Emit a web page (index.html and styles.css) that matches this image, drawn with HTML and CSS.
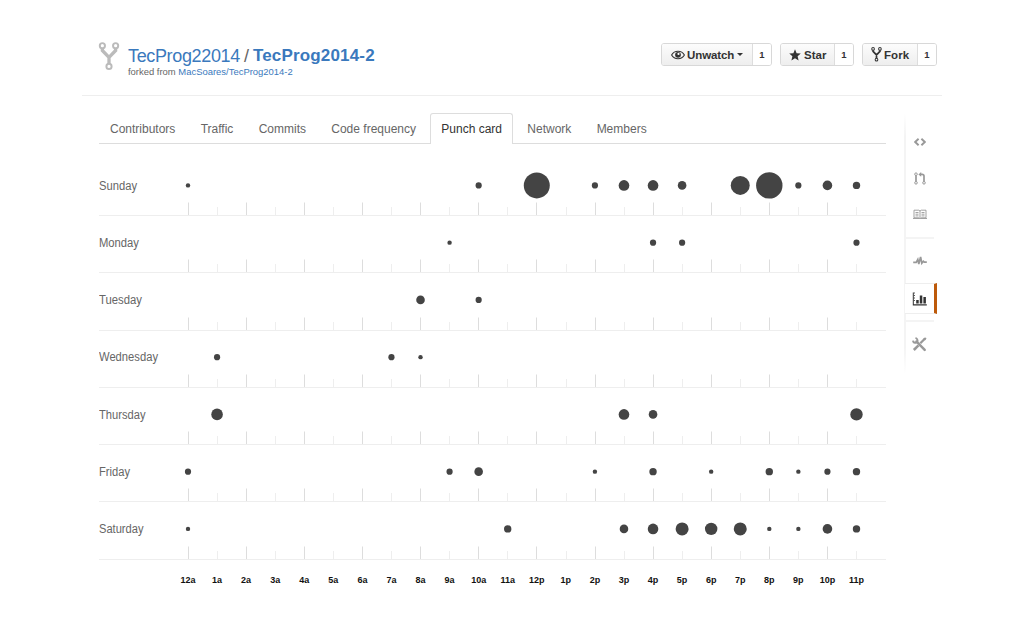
FILE: index.html
```html
<!DOCTYPE html>
<html lang="en">
<head>
<meta charset="utf-8">
<title>TecProg22014/TecProg2014-2</title>
<link rel="stylesheet" href="styles.css">
</head>
<body>
<svg class="defs" width="0" height="0" aria-hidden="true">
  <symbol id="fork" viewBox="0 0 20 28">
    <g fill="none" stroke="currentColor"><circle cx="3.6" cy="3.6" r="2.5" stroke-width="1.9"/><circle cx="16.4" cy="3.6" r="2.5" stroke-width="1.9"/><circle cx="10" cy="23.6" r="2.5" stroke-width="1.9"/><path d="M3.6 6v2.2L10 14.8l6.4-6.6V6M10 14v7" stroke-width="3.2"/></g>
  </symbol>
</svg>
<header class="repohead">
  <svg class="repo-icon"><use href="#fork"/></svg>
  <div class="names">
    <h1 class="title"><a class="owner">TecProg22014</a><span class="slash">/</span><a class="repo">TecProg2014-2</a></h1>
    <p class="forked">forked from <a>MacSoares/TecProg2014-2</a></p>
  </div>
  <div class="actions">
    <div class="action watch"><button class="btn">
      <svg class="eye" viewBox="0 0 14 10"><path d="M.6 5C3.4 0 10.6 0 13.4 5 10.6 10 3.4 10 .6 5z" fill="none" stroke="currentColor" stroke-width="1.1"/><circle cx="7" cy="4.8" r="2.9" fill="currentColor"/><circle cx="7.500" cy="3.9" r="1.100" fill="#fff"/></svg>
      <span>Unwatch</span><i class="caret"></i></button><span class="count">1</span></div>
    <div class="action star"><button class="btn">
      <svg class="star-icon" viewBox="0 0 12 12"><path fill="currentColor" d="M6 .2l1.6 4 4.2.3-3.2 2.8 1 4.3L6 9.300l-3.6 2.300 1-4.300L.2 4.500l4.200-.3z"/></svg>
      <span>Star</span></button><span class="count">1</span></div>
    <div class="action fork"><button class="btn">
      <svg class="fork-icon"><use href="#fork"/></svg>
      <span>Fork</span></button><span class="count">1</span></div>
  </div>
</header>
<div class="main">
  <main class="content">
    <nav class="tabs">
      <a class="tab">Contributors</a><a class="tab">Traffic</a><a class="tab">Commits</a><a class="tab">Code frequency</a><a class="tab selected">Punch card</a><a class="tab">Network</a><a class="tab">Members</a>
    </nav>
    <svg class="punchcard" id="punchcard" width="787" height="456" viewBox="0 0 787 456"></svg>
  </main>
  <aside class="sidebar">
    <div class="group code">
      <a class="item"><svg width="12" height="8" viewBox="0 0 12 8"><path d="M4.6.7L1.200 4l3.400 3.300M7.400.7L10.800 4 7.400 7.300" fill="none" stroke="currentColor" stroke-width="1.9"/></svg></a>
      <a class="item"><svg width="12" height="13" viewBox="0 0 12 13" fill="none" stroke="currentColor"><circle cx="2" cy="2.2" r="1.300"/><circle cx="2" cy="10.800" r="1.300"/><circle cx="10" cy="10.800" r="1.300"/><path d="M2 3.500v6M10 9.500V4Q10 2.400 8.200 2.400H6" stroke-width="1.700"/><path d="M7.200.1v4.600L4.400 2.400z" fill="currentColor" stroke="none"/></svg></a>
      <a class="item"><svg width="14" height="11" viewBox="0 0 14 11" fill="none" stroke="currentColor"><path d="M1 1.200h4.800L7 2l1.200-.8H13v7.600H8.200L7 9.800l-1.200-1H1zM7 2v8M2.500 3.500h3M2.500 5.200h3M2.500 6.900h3M8.500 3.500h3M8.500 5.200h3M8.500 6.900h3M0 9.500h6M8 9.500h6" stroke-width=".9"/></svg></a>
    </div>
    <div class="group stats">
      <a class="item pulse"><svg width="14" height="11" viewBox="0 0 14 11"><path d="M.2 6.400h3L4.800 3.500l1 4.500L7.600 1l1.200 6.200 1.500-2 1 1h2.500" fill="none" stroke="currentColor" stroke-width="1.700"/></svg></a>
      <a class="item graphs"><svg width="15" height="14" viewBox="0 0 15 14" fill="currentColor"><path d="M.8.5h1v12h-1zM.8 12.200h14v1.300H.8zM4.200 8h2.500v3.500H4.200zM7.800 3.500h2.500v8H7.800zM11.400 5h2.500v6.500h-2.500z"/><path d="M1.800.5h1v1h-1zM1.800 3h1v1h-1zM1.800 5.500h1v1h-1zM1.800 8h1v1h-1z"/></svg></a>
    </div>
    <div class="group tools">
      <a class="item"><svg width="15" height="15" viewBox="0 0 15 15" fill="none" stroke="currentColor"><path d="M4.500 4.500l8.200 8.400" stroke-width="2.500" stroke-linecap="round"/><path d="M1 3.600C1.400 6.800 5.800 6.200 5.500 3.200 5.300 2 4.400 1.200 3.500.9" stroke-width="1.900"/><path d="M13.300 1.200L8.300 6.300" stroke-width="2.300"/><path d="M6.500 8.300L1.800 13" stroke-width="2.500"/><path d="M11.200 1.800L13.700.4l.8.9-1.500 2.200z" fill="currentColor" stroke="none"/></svg></a>
    </div>
  </aside>
</div>
<script src="punchcard.js"></script>
</body>
</html>
```
FILE: styles.css
```css
* { box-sizing: border-box; }
body { margin: 0; background: #fff; color: #666; font: 12px "Liberation Sans", Arial, sans-serif; }
.defs { display: none; }
a { color: inherit; text-decoration: none; }
.repohead { display: flex; width: 860px; height: 96px; margin-left: 82px; padding: 42px 5px 0 16px; border-bottom: 1px solid #eee; }
.repo-icon { width: 22px; height: 29px; color: #bbb; flex: none; }
.names { margin-left: 8px; white-space: nowrap; }
.title { display: flex; margin: 3px 0 0; font-size: 18px; letter-spacing: -.35px; line-height: 22px; font-weight: normal; color: #3a79bd; }
.slash { color: #666; margin: 0 4.2px; }
.repo { font-weight: bold; font-size: 17px; letter-spacing: .17px; }
.forked { margin: -1px 0 0; font-size: 9.45px; line-height: 11px; }
.forked a { color: #3a79bd; }
.actions { display: flex; margin-left: auto; gap: 8px; padding-top: 1px; }
.action { display: flex; height: 23px; border: 1px solid #d8d8d8; border-radius: 3px; overflow: hidden; color: #333; }
.watch { width: 111px; }
.star { width: 74px; }
.fork { width: 75px; }
.btn { display: flex; flex: 1; align-items: center; padding: 0 0 0 9px; border: 0; background: linear-gradient(#fcfcfc, #eee); color: #333; font: bold 11.5px "Liberation Sans", Arial, sans-serif; letter-spacing: -.1px; white-space: nowrap; }
.count { width: 19px; border-left: 1px solid #ddd; background: #fff; text-align: center; font-size: 9.5px; font-weight: bold; line-height: 22px; }
.eye { width: 14px; height: 10px; margin-right: 2px; }
.star-icon { width: 12px; height: 12px; margin-right: 3px; }
.fork-icon { width: 11px; height: 15px; margin-right: 2px; }
.star .btn, .fork .btn { padding-left: 8px; letter-spacing: .05px; }
.caret { margin-left: 3px; border: 3.5px solid transparent; border-top-color: #333; border-bottom: 0; }
.main { display: flex; padding: 17px 0 0 99px; }
.content { width: 787px; }
.tabs { display: flex; height: 31px; border-bottom: 1px solid #ddd; }
.tab { height: 31px; padding: 0 11px; margin-right: 3.3px; border: 1px solid transparent; border-width: 1px 0 0; line-height: 30px; white-space: nowrap; }
.tab.selected { padding: 0 10px; border: 1px solid #ddd; border-bottom: 0; border-radius: 3px 3px 0 0; background: #fff; color: #333; }
.punchcard { display: block; font-family: "Liberation Sans", Arial, sans-serif; }
.day { font-size: 12px; fill: #666; }
.hour { font-size: 9px; font-weight: bold; text-anchor: middle; fill: #111; }
.dot { fill: #444; }
.rule { stroke: #eee; }
.tick { stroke: #ddd; }
.tick.minor { stroke: #eee; }
.sidebar { width: 33px; height: 261px; margin-left: 18px; padding-left: 1px; color: #999; background: linear-gradient(#fff, #f4f4f4 9%, #f4f4f4 90%, #fff) left / 2px 100% no-repeat; }
.group { display: flex; flex-direction: column; width: 29px; border-bottom: 2px solid #f4f4f4; }
.item { display: flex; align-items: center; justify-content: center; height: 36px; }
.code { height: 126px; padding-top: 11px; }
.stats { height: 83px; }
.pulse { height: 44px; }
.graphs { width: 32px; height: 31px; border: solid #eee; border-width: 1px 0; border-right: 3px solid #bd5a0b; background: #fff; color: #333; }
.tools { padding-top: 4px; border: 0; }
```
FILE: punchcard.js
```js
const days = [
  ["Sunday", 38, { 0: 2.2, 10: 3.1, 12: 13, 14: 3.1, 15: 5.3, 16: 5.3, 17: 4.3, 19: 9.5, 20: 13.2, 21: 3.1, 22: 4.8, 23: 3.7 }],
  ["Monday", 40, { 9: 2.2, 16: 3.1, 17: 3.1, 23: 3.1 }],
  ["Tuesday", 43, { 8: 4.3, 10: 3.1 }],
  ["Wednesday", 59, { 1: 3.1, 7: 3.1, 8: 2.2 }],
  ["Thursday", 46.5, { 1: 5.8, 15: 5.3, 16: 4.3, 23: 6.2 }],
  ["Friday", 31, { 0: 3.1, 9: 3.1, 10: 4.3, 14: 2.2, 16: 3.7, 18: 2.2, 20: 3.7, 21: 2.2, 22: 3.1, 23: 3.7 }],
  ["Saturday", 44.5, { 0: 2.2, 11: 3.7, 15: 4.3, 16: 5.3, 17: 6.5, 18: 6.2, 19: 6.5, 20: 2.2, 21: 2.2, 22: 4.8, 23: 3.7 }]
];
const hourX = h => 89 + h * 29.065;
let out = "";
days.forEach(([name, width, counts], row) => {
  const y = row * 57.25;
  const base = Math.floor(71.6 + y) + 0.5;
  out += `<text class="day" x="0" y="${Math.floor(y + 46)}" textLength="${width}" lengthAdjust="spacingAndGlyphs">${name}</text>`;
  out += `<path class="rule" d="M0 ${base}H787"/>`;
  for (let h = 0; h < 24; h++) {
    const x = Math.floor(hourX(h) + 0.2) + 0.5;
    out += `<path class="tick${h % 2 ? " minor" : ""}" d="M${x} ${base - 0.5}v${h % 2 ? -8 : -12.5}"/>`;
  }
  for (const h in counts) {
    out += `<circle class="dot" cx="${hourX(h)}" cy="${y + 41.4}" r="${counts[h]}"/>`;
  }
});
for (let h = 0; h < 24; h++) {
  out += `<text class="hour" x="${hourX(h)}" y="439.4">${h % 12 || 12}${h < 12 ? "a" : "p"}</text>`;
}
document.getElementById("punchcard").innerHTML = out;
```
